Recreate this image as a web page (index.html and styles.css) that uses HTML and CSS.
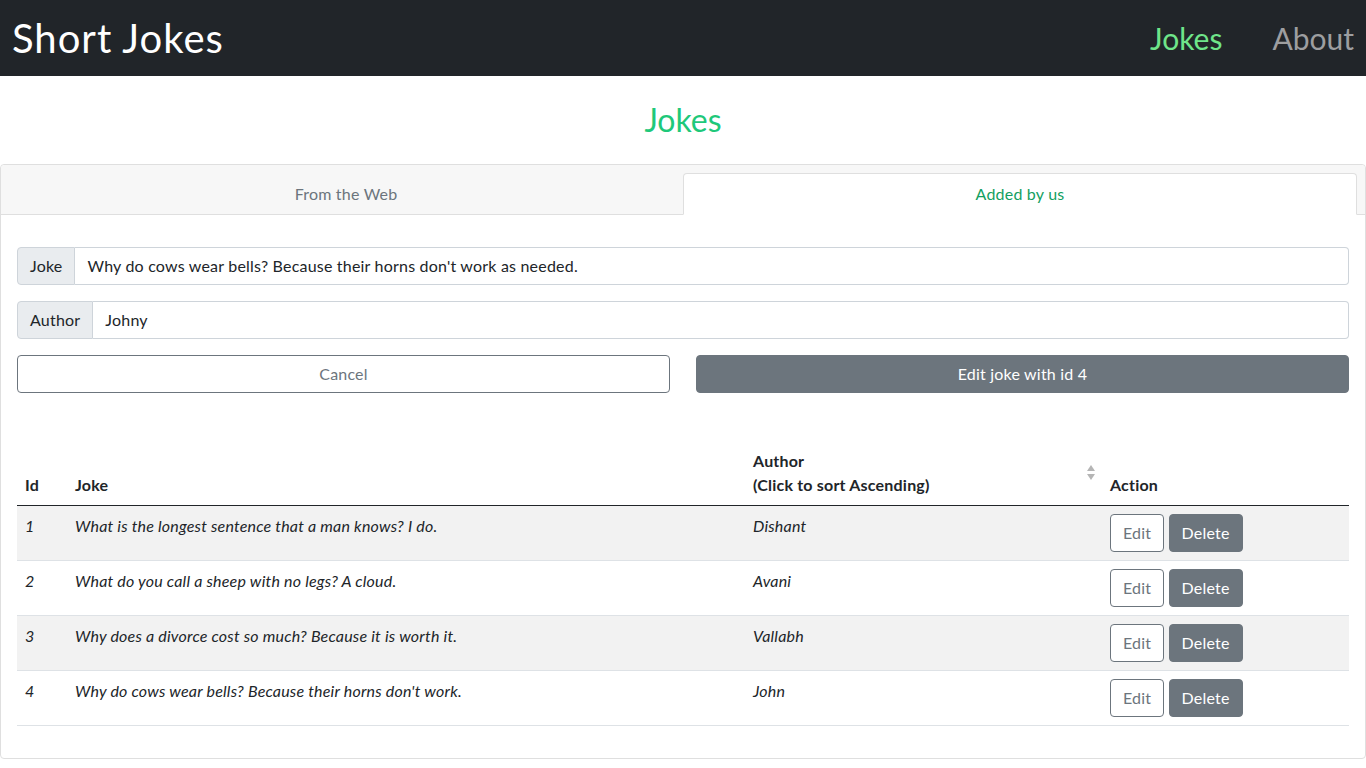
FILE: index.html
```html
<!DOCTYPE html>
<html lang="en">
<head>
<meta charset="utf-8">
<title>Short Jokes</title>
<link rel="stylesheet" href="styles.css">
</head>
<body>
<nav class="navbar">
  <a class="brand" href="#">Short Jokes</a>
  <div class="nav-links">
    <a class="nav-link active" href="#">Jokes</a>
    <a class="nav-link" href="#">About</a>
  </div>
</nav>
<h2 class="page-title">Jokes</h2>
<div class="card">
  <div class="card-header">
    <div class="tabs">
      <a class="tab" href="#">From the Web</a>
      <a class="tab tab-active" href="#">Added by us</a>
    </div>
  </div>
  <div class="card-body">
    <div class="input-group">
      <span class="input-label">Joke</span>
      <input class="input" type="text" value="Why do cows wear bells? Because their horns don't work as needed.">
    </div>
    <div class="input-group">
      <span class="input-label">Author</span>
      <input class="input" type="text" value="Johny">
    </div>
    <div class="btn-row">
      <button class="btn btn-outline btn-block">Cancel</button>
      <button class="btn btn-solid btn-block">Edit joke with id 4</button>
    </div>
    <table class="table">
      <colgroup>
        <col class="c-id">
        <col class="c-joke">
        <col class="c-author">
        <col class="c-action">
      </colgroup>
      <thead>
        <tr>
          <th>Id</th>
          <th>Joke</th>
          <th class="sortable">Author<br>(Click to sort Ascending)<span class="sort-icon"><svg width="8" height="15" viewBox="0 0 8 15"><path d="M4 0 L8 6 H0 Z" fill="#b5b5b5"/><path d="M0 9 H8 L4 15 Z" fill="#b5b5b5"/></svg></span></th>
          <th>Action</th>
        </tr>
      </thead>
      <tbody>
        <tr class="striped">
          <td>1</td>
          <td>What is the longest sentence that a man knows? I do.</td>
          <td>Dishant</td>
          <td class="actions"><button class="btn btn-outline">Edit</button> <button class="btn btn-solid">Delete</button></td>
        </tr>
        <tr>
          <td>2</td>
          <td>What do you call a sheep with no legs? A cloud.</td>
          <td>Avani</td>
          <td class="actions"><button class="btn btn-outline">Edit</button> <button class="btn btn-solid">Delete</button></td>
        </tr>
        <tr class="striped">
          <td>3</td>
          <td>Why does a divorce cost so much? Because it is worth it.</td>
          <td>Vallabh</td>
          <td class="actions"><button class="btn btn-outline">Edit</button> <button class="btn btn-solid">Delete</button></td>
        </tr>
        <tr>
          <td>4</td>
          <td>Why do cows wear bells? Because their horns don't work.</td>
          <td>John</td>
          <td class="actions"><button class="btn btn-outline">Edit</button> <button class="btn btn-solid">Delete</button></td>
        </tr>
      </tbody>
    </table>
  </div>
</div>
</body>
</html>
```
FILE: styles.css
```css
* { box-sizing: border-box; }
html, body { margin: 0; padding: 0; }
body {
  font-family: Lato, "Open Sans", "DejaVu Sans", sans-serif;
  font-size: 16px;
  line-height: 1.5;
  letter-spacing: 0.2px;
  color: #212529;
  background: #fff;
}
a { text-decoration: none; }

.navbar {
  height: 76px;
  background: #212529;
  display: flex;
  align-items: center;
  justify-content: space-between;
  padding: 0 12px;
  letter-spacing: 0;
}
.brand {
  color: #fff;
  font-size: 40px;
  letter-spacing: 1px;
  line-height: 1;
}
.nav-links {
  display: flex;
  gap: 50px;
}
.nav-link {
  font-size: 30px;
  line-height: 1;
  color: #9d9ea0;
}
.nav-link.active { color: #6fe58a; }

.page-title {
  margin: 0;
  height: 88px;
  display: flex;
  align-items: center;
  justify-content: center;
  font-size: 32px;
  font-weight: 400;
  letter-spacing: 0;
  color: #1ec87a;
}

.card {
  border: 1px solid #dfdfdf;
  border-radius: 4px;
  background: #fff;
}
.card-header {
  background: #f7f7f7;
  border-bottom: 1px solid #dfdfdf;
  padding: 8px 8px 0;
  border-radius: 4px 4px 0 0;
}
.tabs {
  display: flex;
  margin-bottom: -1px;
}
.tab {
  flex: 1 1 0;
  height: 42px;
  display: flex;
  align-items: center;
  justify-content: center;
  color: #6c757d;
  border: 1px solid transparent;
  border-radius: 4px 4px 0 0;
}
.tab-active {
  background: #fff;
  color: #13a061;
  border-color: #dfdfdf #dfdfdf #fff;
}

.card-body {
  padding: 32px 16px 16px;
}
.input-group {
  display: flex;
  height: 38px;
  margin-bottom: 16px;
}
.input-label {
  display: flex;
  align-items: center;
  padding: 0 12px;
  background: #e9ecef;
  border: 1px solid #ced4da;
  border-radius: 4px 0 0 4px;
  color: #212529;
}
.input {
  flex: 1;
  min-width: 0;
  font: inherit;
  letter-spacing: inherit;
  color: #212529;
  padding: 6px 12px;
  border: 1px solid #ced4da;
  border-left: 0;
  border-radius: 0 4px 4px 0;
  background: #fff;
}

.btn-row {
  display: flex;
  gap: 26px;
}
.btn {
  font: inherit;
  letter-spacing: inherit;
  line-height: 24px;
  padding: 6px 12px;
  border-radius: 4px;
  border: 1px solid #6c757d;
  cursor: pointer;
}
.btn-block { flex: 1; }
.btn-outline {
  background: #fff;
  color: #6c757d;
}
.btn-solid {
  background: #6c757d;
  color: #fff;
}

.table {
  width: 100%;
  margin-top: 48px;
  margin-bottom: 16px;
  border-collapse: collapse;
  table-layout: fixed;
}
.c-id { width: 50px; }
.c-joke { width: 678px; }
.c-author { width: 357px; }
.c-action { width: 247px; }
.table th {
  text-align: left;
  vertical-align: bottom;
  font-weight: 700;
  padding: 8px;
  border-bottom: 1px solid #212529;
}
.table th.sortable {
  position: relative;
  padding-right: 24px;
}
.sort-icon {
  position: absolute;
  right: 7px;
  top: 24px;
  line-height: 0;
}
.table td {
  vertical-align: top;
  padding: 8px;
  font-style: italic;
  border-bottom: 1px solid #dee2e6;
}
.table td.actions { font-style: normal; }
.table tr.striped td { background: #f2f2f2; }
```
